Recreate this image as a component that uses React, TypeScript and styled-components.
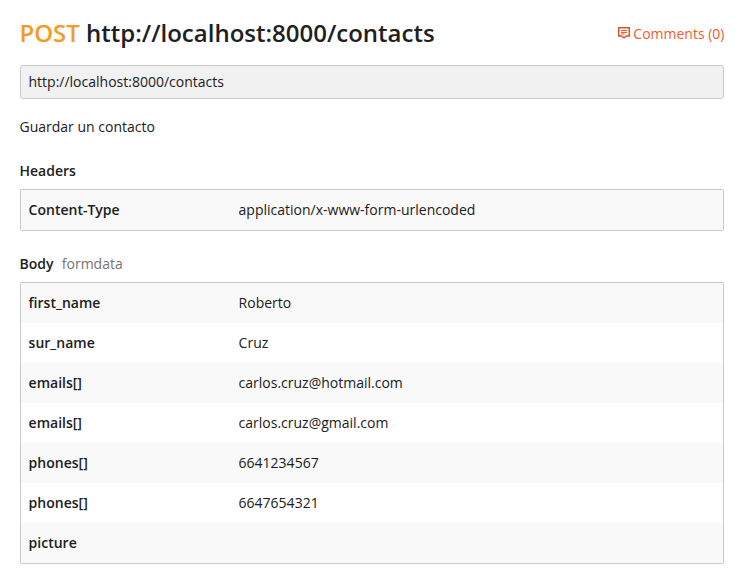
import React from "react";
import styled, { createGlobalStyle } from "styled-components";

const GlobalStyle = createGlobalStyle`
  * { box-sizing: border-box; }
  body { margin: 0; background: #fff; color: #202020; font: 14px/20px "Open Sans", sans-serif; }
`;
const Page = styled.main`
  width: 739px;
  height: 583px;
  padding: 14px 15px 0 20px;
`;
const TitleRow = styled.header`
  display: flex;
  align-items: center;
  justify-content: space-between;
  height: 38px;
`;
const Title = styled.h1`
  margin: 0 0 0 -0.6px;
  font-size: 24px;
  line-height: 38px;
  font-weight: 600;
  white-space: nowrap;
`;
const Method = styled.span`
  color: #f59a23;
`;
const Comments = styled.a`
  display: flex;
  align-items: center;
  gap: 3px;
  padding-top: 2px;
  color: #f05a30;
  margin-right: -0.5px;
  white-space: nowrap;
`;
const CommentIcon = styled.svg`
  flex: none;
  margin-top: -2px;
  color: #d9532c;
`;
const Url = styled.div`
  height: 34px;
  margin-top: 13px;
  padding: 6px 7.5px;
  background: #f1f1f1;
  border: 1px solid #c9c9c9;
  border-radius: 3px;
`;
const Description = styled.p`
  margin: 18px 0 0 -0.5px;
`;
const SectionTitle = styled.h2`
  margin: 0 0 8px -0.5px;
  font-size: 14px;
  line-height: 20px;
  font-weight: 600;
`;
const Section = styled.section<{ $gap: number }>`
  margin-top: ${(p) => p.$gap}px;
`;
const Mode = styled.span`
  margin-left: 8.3px;
  font-weight: 400;
  color: #747474;
`;
const Table = styled.div`
  border: 1px solid #c9c9c9;
  border-radius: 2px;
  overflow: hidden;
`;
const Row = styled.div`
  display: grid;
  grid-template-columns: 210px 1fr;
  height: 40px;
  padding: 10px 7.6px;
  &:nth-child(odd) { background: #f9f9f9; }
`;
const Key = styled.span`
  font-weight: 600;
`;

const fields = [
  ["first_name", "Roberto"],
  ["sur_name", "Cruz"],
  ["emails[]", "carlos.cruz@hotmail.com"],
  ["emails[]", "carlos.cruz@gmail.com"],
  ["phones[]", "6641234567"],
  ["phones[]", "6647654321"],
  ["picture", ""],
];

function Params({ rows }: { rows: string[][] }) {
  return (
    <Table>
      {rows.map(([name, value], i) => (
        <Row key={i}><Key>{name}</Key><span>{value}</span></Row>
      ))}
    </Table>
  );
}

export default function App() {
  return (
    <Page>
      <GlobalStyle />
      <TitleRow>
        <Title><Method>POST</Method> http://localhost:8000/contacts</Title>
        <Comments>
          <CommentIcon width="12" height="12" viewBox="0 0 12 12" fill="none" stroke="currentColor">
            <path d="M.75.75h10.5V9H8.5L6 10.9 3.5 9H.75z" strokeWidth="1.5" />
            <path d="M3 3.5h6M3 5.4h6M3 7h3.6" strokeWidth="1" />
          </CommentIcon>
          Comments (0)
        </Comments>
      </TitleRow>
      <Url>http://localhost:8000/contacts</Url>
      <Description>Guardar un contacto</Description>
      <Section $gap={24}>
        <SectionTitle>Headers</SectionTitle>
        <Params rows={[["Content-Type", "application/x-www-form-urlencoded"]]} />
      </Section>
      <Section $gap={23}>
        <SectionTitle>Body<Mode>formdata</Mode></SectionTitle>
        <Params rows={fields} />
      </Section>
    </Page>
  );
}
